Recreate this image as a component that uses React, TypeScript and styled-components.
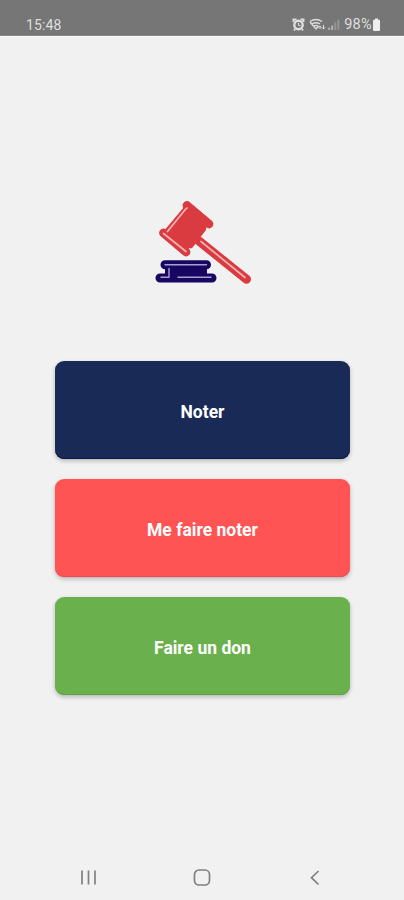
import React from "react";
import styled, { createGlobalStyle } from "styled-components";

const GlobalStyle = createGlobalStyle`
  * { box-sizing: border-box; }
  body { margin: 0; background: #f1f1f1; font-family: Roboto, sans-serif; }
`;

const Screen = styled.div`
  display: flex;
  flex-direction: column;
  width: 404px;
  height: 900px;
  background: #f1f1f1;
  overflow: hidden;
`;

const StatusBar = styled.header`
  display: flex;
  align-items: flex-end;
  justify-content: space-between;
  height: 36px;
  padding: 0 23px 2px 26px;
  background: #767676;
  border-bottom: 1px solid #868686;
  box-shadow: 0 1px 0 #fafafa;
  color: #dedede;
  font-size: 14px;
  line-height: 16px;
`;

const Clock = styled.time`
  letter-spacing: 0.1px;
`;

const Indicators = styled.div`
  display: flex;
  align-items: center;
  height: 16px;
`;

const Percent = styled.span`
  margin: 0 0 0 2px;
  font-size: 14.5px;
  letter-spacing: 0.3px;
`;

const Main = styled.main`
  display: flex;
  flex: 1;
  flex-direction: column;
  align-items: center;
  padding-top: 154px;
`;

const Logo = styled.svg`
  display: block;
  width: 120px;
  height: 105px;
  margin-left: 6px;
`;

const Actions = styled.div`
  display: flex;
  flex-direction: column;
  gap: 20px;
  width: 295px;
  margin: 66px 0 0 1px;
`;

const ActionButton = styled.button<{ $color: string; $edge: string }>`
  height: 98px;
  padding: 3px 0 0;
  border: 0;
  border-radius: 9px;
  background: ${({ $color }) => $color};
  box-shadow: inset 0 -1px 0 ${({ $edge }) => $edge}, 0 2px 4px rgba(0, 0, 0, 0.25);
  color: #fff;
  font: 700 17.5px/20px Roboto, sans-serif;
`;

const NavBar = styled.nav`
  display: flex;
  align-items: center;
  justify-content: space-between;
  height: 45px;
  padding: 0 78px 0 77px;
`;

const NavIcon = styled.svg`
  width: 22px;
  height: 22px;
  fill: none;
  stroke: #808080;
  stroke-width: 1.7;
`;

const StatusIcons = () => (
  <svg width="50" height="16" viewBox="0 0 50 16" fill="none" stroke="#dedede">
    <circle cx="6.5" cy="8" r="4.2" strokeWidth="2.4" />
    <path d="M1.5 5V2.5h3M11.5 5V2.5h-3M3 12l-1 1.5M10 12l1 1.5" strokeWidth="1.9" />
    <path d="M6.5 6v2.5h2" strokeWidth="1" />
    <path d="M18 4.5q6-4 12 0M20 7q4-2.5 8 0M18 5l6 7 2.5-3M22 9q2-1.2 4 0" strokeWidth="1.3" />
    <path d="M28 12V9m-1.5 1.5L28 9l1.5 1.5M31.5 8v4m-1.5-1.5 1.5 1.5 1.5-1.5" strokeWidth="1" />
    <path d="M37.2 13v-2.5M40.2 13V8.5" stroke="#b5b5b5" strokeWidth="1.8" />
    <path d="M43.3 13V5.5M46.4 13V2.5" stroke="#969696" strokeWidth="1.9" />
  </svg>
);

const Battery = () => (
  <svg width="9" height="14" viewBox="0 0 9 14" fill="#eeeeee">
    <path d="M3 .5h3v1.3h1q1 0 1 1V12q0 1-1 1H2q-1 0-1-1V2.8q0-1 1-1h1z" />
  </svg>
);

const Gavel = () => (
  <Logo viewBox="0 0 120 105" fill="none" strokeLinecap="round" strokeLinejoin="round">
    <path d="M54 51 101.5 89.3" stroke="#d93b40" strokeWidth="9" />
    <path d="M42 15 64 34 41 62 18 43Z" fill="#d93b40" />
    <path d="M42 15.5 64 34M18.5 43 41 62" stroke="#d93b40" strokeWidth="8.8" />
    <path d="M42 17 21 42M59 39 46 56" stroke="#d93b40" strokeWidth="4.5" />
    <path d="M42 18 39.7 20.2 22.5 41.5M18.5 43.5 41 61.5M56 51.5 100 87.5" stroke="#f6b4b2" strokeWidth="1.7" />
    <path d="M20 74.8H61.5M15 88H67" stroke="#170762" strokeWidth="9" />
    <path d="M20 75H62V88H20Z" fill="#170762" />
    <path d="M20 74.7H61.5M24 78.5V87.3H16M33 87.3H66" stroke="#a7a1cc" strokeWidth="1.4" />
  </Logo>
);

const actions = [
  { label: "Noter", color: "#192a56", edge: "#0b164b" },
  { label: "Me faire noter", color: "#ff5354", edge: "#ef484d" },
  { label: "Faire un don", color: "#6ab04c", edge: "#5ca540" },
];

export default function App() {
  return (
    <Screen>
      <GlobalStyle />
      <StatusBar>
        <Clock>15:48</Clock>
        <Indicators>
          <StatusIcons />
          <Percent>98%</Percent>
          <Battery />
        </Indicators>
      </StatusBar>
      <Main>
        <Gavel />
        <Actions>
          {actions.map(({ label, color, edge }) => (
            <ActionButton key={label} $color={color} $edge={edge}>
              {label}
            </ActionButton>
          ))}
        </Actions>
      </Main>
      <NavBar>
        <NavIcon viewBox="0 0 22 22">
          <path d="M5 3.5v14M11.5 3.5v14M18 3.5v14" />
        </NavIcon>
        <NavIcon viewBox="0 0 22 22">
          <rect x="3.5" y="3" width="15" height="15" rx="4.5" />
        </NavIcon>
        <NavIcon viewBox="0 0 22 22">
          <path d="m14.5 4-7 6.7 7 6.8" />
        </NavIcon>
      </NavBar>
    </Screen>
  );
}
